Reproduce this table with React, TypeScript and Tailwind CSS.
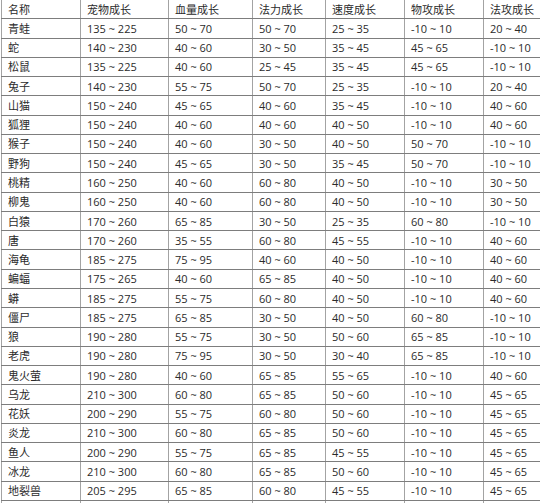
const header = ["名称", "宠物成长", "血量成长", "法力成长", "速度成长", "物攻成长", "法攻成长"];

const rows: string[][] = [
  ["青蛙", "135~225", "50~70", "50~70", "25~35", "-10~10", "20~40"],
  ["蛇", "140~230", "40~60", "30~50", "35~45", "45~65", "-10~10"],
  ["松鼠", "135~225", "40~60", "25~45", "35~45", "45~65", "-10~10"],
  ["兔子", "140~230", "55~75", "50~70", "25~35", "-10~10", "20~40"],
  ["山猫", "150~240", "45~65", "40~60", "35~45", "-10~10", "40~60"],
  ["狐狸", "150~240", "40~60", "40~60", "40~50", "-10~10", "40~60"],
  ["猴子", "150~240", "40~60", "30~50", "40~50", "50~70", "-10~10"],
  ["野狗", "150~240", "45~65", "30~50", "35~45", "50~70", "-10~10"],
  ["桃精", "160~250", "40~60", "60~80", "40~50", "-10~10", "30~50"],
  ["柳鬼", "160~250", "40~60", "60~80", "40~50", "-10~10", "30~50"],
  ["白猿", "170~260", "65~85", "30~50", "25~35", "60~80", "-10~10"],
  ["唐", "170~260", "35~55", "60~80", "45~55", "-10~10", "40~60"],
  ["海龟", "185~275", "75~95", "40~60", "40~50", "-10~10", "40~60"],
  ["蝙蝠", "175~265", "40~60", "65~85", "40~50", "-10~10", "40~60"],
  ["蟒", "185~275", "55~75", "60~80", "40~50", "-10~10", "40~60"],
  ["僵尸", "185~275", "65~85", "30~50", "40~50", "60~80", "-10~10"],
  ["狼", "190~280", "55~75", "30~50", "50~60", "65~85", "-10~10"],
  ["老虎", "190~280", "75~95", "30~50", "30~40", "65~85", "-10~10"],
  ["鬼火萤", "190~280", "40~60", "65~85", "55~65", "-10~10", "40~60"],
  ["乌龙", "210~300", "60~80", "65~85", "50~60", "-10~10", "45~65"],
  ["花妖", "200~290", "55~75", "60~80", "50~60", "-10~10", "45~65"],
  ["炎龙", "210~300", "60~80", "65~85", "50~60", "-10~10", "45~65"],
  ["鱼人", "200~290", "55~75", "65~85", "45~55", "-10~10", "45~65"],
  ["冰龙", "210~300", "60~80", "65~85", "50~60", "-10~10", "45~65"],
  ["地裂兽", "205~295", "65~85", "60~80", "45~55", "-10~10", "45~65"],
  ["", "", "", "", "", "", ""],
];

// "135~225" -> "135 ~ 225"
const fmt = (v: string) => v.replace("~", " ~ ");

const Row = ({ cells }: { cells: string[] }) => (
  <div className="grid h-[19.27px] grid-cols-[79px_88px_84px_73px_79px_79px_80px] border-b border-[#7d7d7d]">
    {cells.map((c, i) => (
      <div
        key={i}
        className="flex items-center border-l border-[#a3a3a3] pl-[6px] whitespace-nowrap"
      >
        {fmt(c)}
      </div>
    ))}
  </div>
);

export default function App() {
  return (
    <div
      className="h-[503px] w-[540px] overflow-hidden bg-white pl-[1px] text-[11px] leading-none text-[#2b2b2b]"
      style={{ fontFamily: '"Open Sans", "Noto Sans CJK SC", sans-serif' }}
    >
      <div className="w-[562px]">
        <Row cells={header} />
        {rows.map((r, i) => (
          <Row key={i} cells={r} />
        ))}
      </div>
    </div>
  );
}
